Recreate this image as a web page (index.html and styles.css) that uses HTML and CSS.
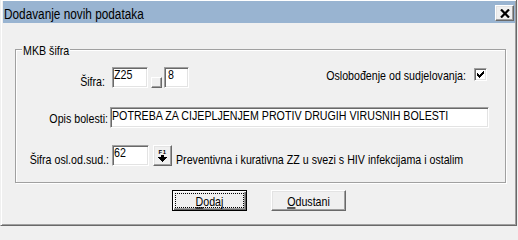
FILE: index.html
```html
<!DOCTYPE html>
<html lang="hr">
<head>
<meta charset="utf-8">
<title>Dodavanje novih podataka</title>
<link rel="stylesheet" href="styles.css">
</head>
<body>
<div class="window">
  <div class="titlebar">
    <span class="title-text">Dodavanje novih podataka</span>
    <div class="close-btn">
      <svg width="10" height="9" viewBox="0 0 10 9"><path d="M1 0.5 L9 8.5 M9 0.5 L1 8.5" stroke="#000" stroke-width="2.2" fill="none"/></svg>
    </div>
  </div>
  <div class="group">
    <span class="legend"><span class="t">MKB šifra</span></span>
    <div class="row">
      <span class="lbl lbl1"><span class="t">Šifra:</span></span>
      <div class="edit edit-z25"><span class="t val-top">Z25</span></div>
      <div class="btn-mini"></div>
      <div class="edit edit-8"><span class="t val-top">8</span></div>
      <span class="lbl-check"><span class="t">Oslobođenje od sudjelovanja:</span></span>
      <div class="checkbox">
        <svg width="7" height="7" viewBox="0 0 7 7" shape-rendering="crispEdges"><path d="M6 0h1v1h-1z M5 1h2v1h-2z M0 2h1v1h-1z M4 2h3v1h-3z M0 3h2v1h-2z M3 3h3v1h-3z M0 4h5v1h-5z M1 5h3v1h-3z M2 6h1v1h-1z" fill="#000"/></svg>
      </div>
    </div>
    <div class="row row2">
      <span class="lbl lbl2"><span class="t">Opis bolesti:</span></span>
      <div class="edit edit-opis"><span class="t">POTREBA ZA CIJEPLJENJEM PROTIV DRUGIH VIRUSNIH BOLESTI</span></div>
    </div>
    <div class="row row3">
      <span class="lbl lbl3"><span class="t">Šifra osl.od.sud.:</span></span>
      <div class="edit edit-62"><span class="t val-top">62</span></div>
      <div class="btn-f1">
        <span class="f1-text">F1</span>
        <svg width="9" height="7" viewBox="0 0 9 7" shape-rendering="crispEdges"><path d="M3 0h3v2h-3z M0 2h9v1h-9z M1 3h7v1h-7z M2 4h5v1h-5z M3 5h3v1h-3z M4 6h1v1h-1z" fill="#000"/></svg>
      </div>
      <span class="desc"><span class="t">Preventivna i kurativna ZZ u svezi s HIV infekcijama i ostalim</span></span>
    </div>
  </div>
  <div class="buttons">
    <div class="btn btn-default"><span class="focus"><span class="t"><u>D</u>odaj</span></span></div>
    <div class="btn btn-normal"><span class="t"><u>O</u>dustani</span></div>
  </div>
</div>
</body>
</html>
```
FILE: styles.css
```css
* { box-sizing: border-box; }
html, body { margin: 0; padding: 0; }
body {
  background: #f0f0f0;
  width: 518px;
  height: 228px;
  overflow: hidden;
  font-family: "Liberation Sans", Arial, sans-serif;
  font-size: 10.67px;
  color: #000;
}
.window {
  width: 517px;
  height: 227px;
  margin-top: -1px;
  border: 1px solid;
  border-color: #f0f0f0 #696969 #696969 #f0f0f0;
  box-shadow: inset 1px 1px 0 #fff, inset -1px -1px 0 #a0a0a0;
  padding: 1px 1px 2px 2px;
  display: flex;
  flex-direction: column;
}
.titlebar {
  flex: none;
  height: 22px;
  background: #99b4d1;
  display: flex;
  align-items: flex-start;
  padding-left: 1px;
}
.title-text {
  display: inline-block;
  font-size: 11.8px;
  line-height: 14px;
  margin-top: 6px;
  transform: scaleY(1.18);
  white-space: nowrap;
}
.close-btn {
  margin-left: auto;
  margin-right: 1px;
  margin-top: 4px;
  width: 19px;
  height: 16px;
  background: #f0f0f0;
  border: 1px solid;
  border-color: #fff #696969 #696969 #fff;
  box-shadow: inset -1px -1px 0 #a0a0a0, inset 1px 1px 0 #e3e3e3;
  display: flex;
  align-items: center;
  justify-content: center;
}
.group {
  flex: none;
  position: relative;
  margin: 26px 0 0 12px;
  width: 491px;
  height: 134px;
  border: 1px solid #a0a0a0;
  box-shadow: 1px 1px 0 #fff, inset 1px 1px 0 #fff;
  padding-top: 17px;
}
.legend {
  position: absolute;
  left: 6px;
  top: -6px;
  padding: 0 1px;
  background: #f0f0f0;
  line-height: 12px;
}
.t {
  display: inline-block;
  line-height: 12px;
  transform: scaleY(1.27);
  white-space: nowrap;
  vertical-align: top;
}
.row {
  display: flex;
  align-items: flex-start;
  height: 21px;
}
.row2 { margin-top: 19px; }
.row3 { margin-top: 17px; }
.lbl {
  flex: none;
  text-align: right;
  line-height: 12px;
}
.lbl1 { width: 89px; margin-top: 8px; }
.lbl2 { width: 92px; margin-top: 5px; }
.lbl3 { width: 93px; margin-top: 8px; }
.edit {
  flex: none;
  height: 21px;
  background: #fff;
  border: 1px solid;
  border-color: #a0a0a0 #fff #fff #a0a0a0;
  box-shadow: inset 1px 1px 0 #696969, inset -1px -1px 0 #e3e3e3;
  padding: 1px 0 0 1px;
  display: flex;
  align-items: flex-start;
}
.val-top { margin-top: -1px; }
.edit-z25 { margin-left: 7px; width: 36px; }
.edit-8 { margin-left: 2px; width: 25px; padding-left: 3px; }
.edit-opis { margin-left: 2px; width: 379px; }
.edit-62 { margin-left: 3px; width: 37px; }
.btn-mini {
  flex: none;
  margin: 10px 0 0 3px;
  width: 11px;
  height: 11px;
  background: #f0f0f0;
  border: 1px solid;
  border-color: #fff #696969 #696969 #fff;
  box-shadow: inset -1px -1px 0 #a0a0a0;
}
.lbl-check {
  margin-left: auto;
  margin-top: 2px;
  line-height: 12px;
}
.checkbox {
  flex: none;
  margin: 1px 18px 0 8px;
  width: 13px;
  height: 13px;
  background: #fff;
  border: 1px solid;
  border-color: #a0a0a0 #fff #fff #a0a0a0;
  box-shadow: inset 1px 1px 0 #696969, inset -1px -1px 0 #e3e3e3;
  display: flex;
  align-items: center;
  justify-content: center;
}
.btn-f1 {
  flex: none;
  margin-left: 4px;
  width: 19px;
  height: 21px;
  background: #f0f0f0;
  border: 1px solid;
  border-color: #fff #696969 #696969 #fff;
  box-shadow: inset -1px -1px 0 #a0a0a0, inset 1px 1px 0 #e3e3e3;
  display: flex;
  flex-direction: column;
  align-items: center;
  padding-top: 3px;
}
.f1-text {
  font-size: 6px;
  font-weight: bold;
  line-height: 6px;
  letter-spacing: 0.5px;
}
.desc {
  margin-left: 4px;
  margin-top: 8px;
  line-height: 12px;
}
.buttons {
  flex: none;
  display: flex;
  justify-content: center;
  gap: 24px;
  margin-top: 7px;
}
.btn {
  width: 75px;
  height: 21px;
  background: #f0f0f0;
  display: flex;
  align-items: center;
  justify-content: center;
}
.btn-default {
  border: 1px solid #000;
  box-shadow: inset 1px 1px 0 #fff, inset -1px -1px 0 #696969, inset -2px -2px 0 #a0a0a0;
  padding: 2px;
}
.focus {
  flex: 1;
  align-self: stretch;
  border: 1px dotted #000;
  display: flex;
  align-items: center;
  justify-content: center;
}
.btn-normal {
  border: 1px solid;
  border-color: #fff #696969 #696969 #fff;
  box-shadow: inset -1px -1px 0 #a0a0a0, inset 1px 1px 0 #e3e3e3;
}
```
